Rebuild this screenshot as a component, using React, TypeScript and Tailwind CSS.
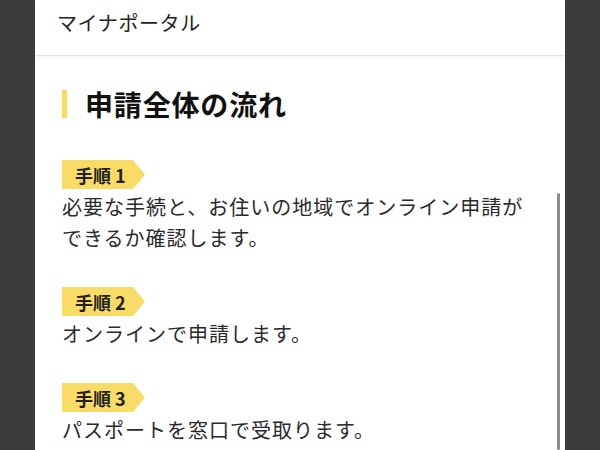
const steps = [
  { label: '手順 1', text: '必要な手続と、お住いの地域でオンライン申請ができるか確認します。' },
  { label: '手順 2', text: 'オンラインで申請します。' },
  { label: '手順 3', text: 'パスポートを窓口で受取ります。' },
];

const font = { fontFamily: '"Noto Sans CJK JP", "Noto Sans", sans-serif' };

export default function App() {
  return (
    <div className="flex justify-center h-[450px] bg-[#3c3c3c] overflow-hidden" style={font}>
      <div className="relative w-[530px] bg-white flex flex-col">
        <header className="h-[56px] shrink-0 px-[22px] pt-[10px] border-b border-[#e6e6e6] shadow-[0_1px_3px_rgba(0,0,0,0.06)]">
          <span className="block text-[20px] leading-[26px] text-[#222] tracking-[0.03em]">マイナポータル</span>
        </header>

        <div className="pl-[27px] pr-[34px] pt-[34px]">
          <div className="flex items-center h-[28px]">
            <span className="w-[5px] h-[28px] bg-[#f9dc5c] mr-[18px]"></span>
            <h1 className="text-[28px] font-bold text-[#111] leading-none tracking-[0.03em]">申請全体の流れ</h1>
          </div>

          <div className="mt-[42px] space-y-[34px]">
            {steps.map((s) => (
              <div key={s.label}>
                <div
                  className="w-[83px] h-[29px] bg-[#f9dc66] flex items-center pl-[13px] pt-[1px] text-[18px] font-bold text-[#222]"
                  style={{ clipPath: 'polygon(0 0, 71px 0, 83px 50%, 71px 100%, 0 100%)' }}
                >
                  {s.label}
                </div>
                <p className="text-[20px] leading-[31px] text-[#2a2a2a] tracking-[0.05em] mt-[2px]">{s.text}</p>
              </div>
            ))}
          </div>
        </div>

        <div className="absolute right-[5px] top-[193px] bottom-0 w-[3px] rounded-full bg-[#8c8c8c]"></div>
      </div>
    </div>
  );
}
